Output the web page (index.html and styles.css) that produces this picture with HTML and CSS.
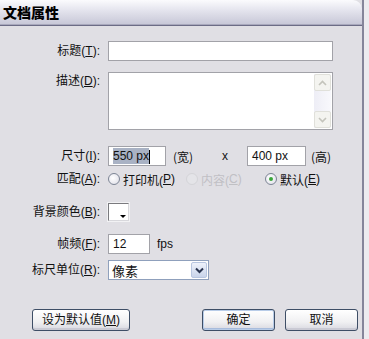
FILE: index.html
```html
<!DOCTYPE html>
<html>
	<head>
		<meta charset="utf-8">
		<title>文档属性</title>
		<link rel="stylesheet" href="styles.css">
	</head>
	<body>
		<div class="dialog">
			<div class="titlebar">文档属性</div>
			<div class="content">
				<div class="row r-title">
					<div class="lbl">标题(<u>T</u>):</div>
					<div class="box w-wide h20"></div>
				</div>
				<div class="row r-desc">
					<div class="lbl">描述(<u>D</u>):</div>
					<div class="box w-wide area">
						<div class="scroll">
							<div class="sbtn"><svg width="9" height="6" viewBox="0 0 9 6"><path d="M1 5 L4.5 1.5 L8 5" fill="none" stroke="#c4c4bc" stroke-width="1.6"/></svg></div>
							<div class="track"></div>
							<div class="sbtn"><svg width="9" height="6" viewBox="0 0 9 6"><path d="M1 1 L4.5 4.5 L8 1" fill="none" stroke="#c4c4bc" stroke-width="1.6"/></svg></div>
						</div>
					</div>
				</div>
				<div class="row r-size">
					<div class="lbl">尺寸(<u>I</u>):</div>
					<div class="box w-size h20 txt"><span class="sel">550 px</span><span class="caret"></span></div>
					<span class="unit">(宽)</span>
					<span class="times">x</span>
					<div class="box w-size2 h20 txt">400 px</div>
					<span class="unit2">(高)</span>
				</div>
				<div class="row r-match">
					<div class="lbl">匹配(<u>A</u>):</div>
					<span class="opt o1"><span class="radio"></span>打印机(<u>P</u>)</span>
					<span class="opt o2 off"><span class="radio"></span>内容(<u>C</u>)</span>
					<span class="opt"><span class="radio on"></span>默认(<u>E</u>)</span>
				</div>
				<div class="row r-bg">
					<div class="lbl">背景颜色(<u>B</u>):</div>
					<div class="swatch"><span class="tri"></span></div>
				</div>
				<div class="row r-fps">
					<div class="lbl">帧频(<u>F</u>):</div>
					<div class="box w-fps h20 txt">12</div>
					<span class="unit">fps</span>
				</div>
				<div class="row r-ruler">
					<div class="lbl">标尺单位(<u>R</u>):</div>
					<div class="select">
						<span class="seltext">像素</span>
						<span class="drop"><svg width="9" height="7" viewBox="0 0 9 7"><path d="M1 1.5 L4.5 5 L8 1.5" fill="none" stroke="#2a3550" stroke-width="2"/></svg></span>
					</div>
				</div>
				<div class="buttons">
					<div class="btn b-default">设为默认值(<u>M</u>)</div>
					<div class="btn b-ok">确定</div>
					<div class="btn b-cancel">取消</div>
				</div>
			</div>
		</div>
	</body>
</html>
```

FILE: styles.css
```css
*{margin:0;padding:0;box-sizing:border-box}
body{
	background:#ecebef;
	font-family:"Liberation Sans","Noto Sans CJK SC",sans-serif;
	font-size:12px;
	color:#111;
}
.dialog{
	width:364px;
	height:339px;
	background:#e0dfe4;
	border-right:2px solid #85859a;
}
.titlebar{
	height:26px;
	padding-left:3px;
	line-height:24px;
	font-size:14px;
	font-weight:900;
	font-family:"Noto Sans CJK SC",sans-serif;
	color:#000;
	background:linear-gradient(#fbfbfd,#e2e2ec 45%,#c6c6d6);
	border-bottom:1px solid #6c6c86;
	border-top-right-radius:9px;
	box-shadow:inset 0 -1px 0 #a8a8bc;
}
.content{padding-top:15px}
.row{
	display:flex;
	align-items:center;
}
.lbl{
	width:100px;
	margin-right:8px;
	text-align:right;
	line-height:16px;
	white-space:nowrap;
}
u{text-decoration:underline}
.box{
	background:#fff;
	border:1px solid #a2a2a8;
}
.h20{height:20px}
.w-wide{width:225px}
.txt{
	padding-left:4px;
	line-height:18px;
	white-space:nowrap;
}
.area{
	height:58px;
	position:relative;
}
.r-desc{
	align-items:flex-start;
	margin-top:11px;
}
.r-desc .lbl{margin-top:1px}
.scroll{
	position:absolute;
	right:1px;
	top:1px;
	bottom:1px;
	width:17px;
	display:flex;
	flex-direction:column;
	background:linear-gradient(90deg,#eeeef6,#f8f8fc);
}
.sbtn{
	height:17px;
	border:1px solid #e0e0da;
	border-radius:2px;
	background:#f4f4f0;
	display:flex;
	align-items:center;
	justify-content:center;
}
.track{flex:1}
.r-size{margin-top:16px}
.w-size{width:58px}
.w-size2{width:59px}
.sel{background:#a9b2c4;padding:1px 0}
.caret{
	display:inline-block;
	width:1px;
	height:14px;
	background:#000;
	vertical-align:middle;
}
.unit{margin-left:7px;width:49px;font-family:"Noto Sans CJK SC",sans-serif}
.times{width:25px}
.unit2{margin-left:5px;font-family:"Noto Sans CJK SC",sans-serif}
.r-match{margin-top:5px;height:16px}
.opt{
	display:flex;
	align-items:center;
	white-space:nowrap;
}
.o1{width:78px}
.o2{width:79px}
.off{color:#c0c0c4}
.radio{
	width:12px;
	height:12px;
	border:1px solid #7c8494;
	border-radius:50%;
	background:radial-gradient(circle at 40% 40%,#fff,#dcdce6);
	margin-right:3px;
	position:relative;
}
.off .radio{border-color:#d4d4d8;background:#e4e4e8}
.radio.on:after{
	content:"";
	position:absolute;
	left:3px;
	top:3px;
	width:4px;
	height:4px;
	border-radius:50%;
	background:#3aa63a;
}
.r-bg{margin-top:16px}
.swatch{
	width:21px;
	height:18px;
	background:#fff;
	border:1px solid;
	border-color:#7a7a7e #d8d8dc #d8d8dc #7a7a7e;
	box-shadow:0 0 0 1px #f2f2f4;
	position:relative;
}
.tri{
	position:absolute;
	right:2px;
	bottom:2px;
	border-left:3px solid transparent;
	border-right:3px solid transparent;
	border-top:3px solid #000;
}
.r-fps{margin-top:13px}
.w-fps{width:42px}
.r-fps .unit{font-family:"Liberation Sans",sans-serif}
.r-ruler{margin-top:6px}
.select{
	width:101px;
	height:20px;
	background:#fff;
	border:1px solid #8fa0bc;
	display:flex;
	align-items:center;
}
.seltext{
	flex:1;
	padding-left:3px;
	font-family:"Noto Sans CJK SC",sans-serif;
	font-size:13px;
}
.drop{
	width:16px;
	height:16px;
	margin-right:1px;
	border:1px solid #b8c6e0;
	border-radius:2px;
	background:linear-gradient(#eef2fb,#c9d4ea);
	display:flex;
	align-items:center;
	justify-content:center;
}
.buttons{
	display:flex;
	margin-top:29px;
	padding:0 4px 0 32px;
}
.btn{
	height:22px;
	line-height:20px;
	text-align:center;
	border:1px solid #3e4e66;
	border-radius:3px;
	background:linear-gradient(#ffffff,#f0f0f2 60%,#d8d8e0);
	box-shadow:inset 0 -2px 0 #cacad4;
	font-family:"Liberation Sans","Noto Sans CJK SC",sans-serif;
	font-size:12px;
}
.b-default{width:98px}
.b-ok{width:73px;margin-left:auto;box-shadow:inset 0 0 0 1px #b8cce8,inset 0 -2px 0 #a8bcdc}
.b-cancel{width:73px;margin-left:10px}
```
